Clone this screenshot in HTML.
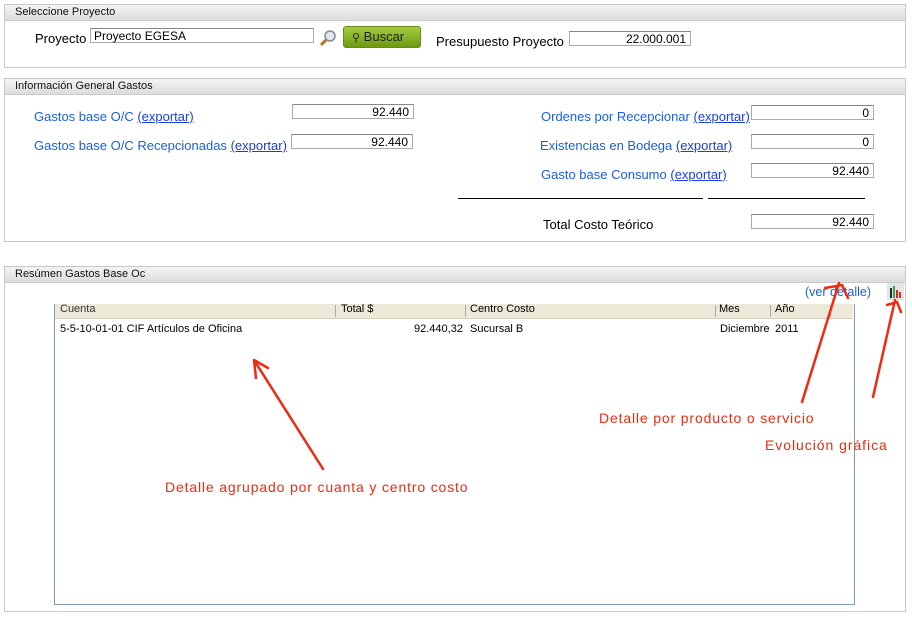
<!DOCTYPE html><html><head><style>
body{margin:0;width:912px;height:620px;background:#fff;font-family:"Liberation Sans",sans-serif;position:relative;overflow:hidden}
.p{position:absolute;left:4px;width:900px;border:1px solid #c8c8c8;background:#fff}
.h{height:15px;background:linear-gradient(#f4f4f4,#dcdcdc);border-bottom:1px solid #ccc;font-size:11px;line-height:15px;padding-left:10px;color:#111}
.a{position:absolute;font-size:13px;white-space:nowrap}
.b{color:#1a5fe0}.u{text-decoration:underline;color:#1a3fe0}
.i{position:absolute;height:15px;border:1px solid #aaa;border-top-color:#888;background:#fff;font-size:12px;line-height:15px;text-align:right;padding-right:4px;box-sizing:border-box}
.t{position:absolute;font-size:11px;white-space:nowrap}
.r{position:absolute;color:#f02a10;font-size:14px;letter-spacing:0.85px;white-space:nowrap}
</style></head><body>
<div class="p" style="top:4px;height:62px"><div class="h">Seleccione Proyecto</div></div>
<div class="a" style="left:35px;top:31px">Proyecto</div>
<div class="i" style="left:90px;top:28px;width:224px;text-align:left;padding-left:3px;font-size:12px">Proyecto EGESA</div>
<svg style="position:absolute;left:319px;top:29px" width="18" height="18"><circle cx="11" cy="7" r="5" fill="#dfe8f0" stroke="#889" stroke-width="1.5"/><line x1="7" y1="11" x2="2" y2="16" stroke="#c07020" stroke-width="3"/></svg>
<div style="position:absolute;left:343px;top:26px;width:76px;height:20px;border-radius:3px;background:linear-gradient(#a4cc40,#6e9a10);border:1px solid #6a8a20;font-size:13px;line-height:20px;color:#222"><span style="margin-left:8px;font-size:11px">⚲</span> Buscar</div>
<div class="a" style="left:436px;top:34px">Presupuesto Proyecto</div>
<div class="i" style="left:569px;top:31px;width:122px">22.000.001</div>

<div class="p" style="top:78px;height:162px"><div class="h">Información General Gastos</div></div>
<div class="a b" style="left:34px;top:109px">Gastos base O/C <span class="u">(exportar)</span></div>
<div class="a b" style="left:34px;top:138px">Gastos base O/C Recepcionadas <span class="u">(exportar)</span></div>
<div class="i" style="left:292px;top:104px;width:122px">92.440</div>
<div class="i" style="left:291px;top:134px;width:122px">92.440</div>
<div class="a b" style="left:541px;top:109px">Ordenes por Recepcionar <span class="u">(exportar)</span></div>
<div class="a b" style="left:540px;top:138px">Existencias en Bodega <span class="u">(exportar)</span></div>
<div class="a b" style="left:541px;top:167px">Gasto base Consumo <span class="u">(exportar)</span></div>
<div class="i" style="left:751px;top:105px;width:123px">0</div>
<div class="i" style="left:751px;top:134px;width:123px">0</div>
<div class="i" style="left:751px;top:163px;width:123px">92.440</div>
<div style="position:absolute;left:458px;top:198px;width:245px;height:1px;background:#000"></div>
<div style="position:absolute;left:708px;top:198px;width:157px;height:1px;background:#000"></div>
<div class="a" style="left:543px;top:217px">Total Costo Teórico</div>
<div class="i" style="left:751px;top:214px;width:123px">92.440</div>

<div class="p" style="top:266px;height:344px"><div class="h">Resúmen Gastos Base Oc</div></div>
<div class="a b" style="left:805px;top:285px;font-size:12.5px">(ver detalle)</div>
<svg style="position:absolute;left:887px;top:283px" width="17" height="17"><rect x="0" y="0" width="17" height="17" fill="#e4e4e4"/><rect x="3" y="5" width="2" height="10" fill="#224"/><rect x="6" y="3" width="2" height="12" fill="#3a3"/><rect x="9" y="7" width="2" height="8" fill="#d22"/><rect x="12" y="9" width="2" height="6" fill="#c33"/></svg>
<div style="position:absolute;left:54px;top:304px;width:799px;height:300px;border:1px solid #7f9db9;border-top:none;background:#fff"></div>
<div style="position:absolute;left:55px;top:304px;width:798px;height:14px;background:#ece9d8;border-bottom:1px solid #d6d2c2"></div>
<div class="t" style="left:60px;top:303px;color:#333">Cuenta</div>
<div class="t" style="left:341px;top:303px">Total $</div>
<div class="t" style="left:470px;top:303px">Centro Costo</div>
<div class="t" style="left:719px;top:303px">Mes</div>
<div class="t" style="left:775px;top:303px">Año</div>
<div style="position:absolute;left:335px;top:305px;width:1px;height:12px;background:#aaa"></div>
<div style="position:absolute;left:465px;top:305px;width:1px;height:12px;background:#aaa"></div>
<div style="position:absolute;left:715px;top:305px;width:1px;height:12px;background:#aaa"></div>
<div style="position:absolute;left:770px;top:305px;width:1px;height:12px;background:#aaa"></div>
<div style="position:absolute;left:830px;top:305px;width:1px;height:12px;background:#aaa"></div>
<div class="t" style="left:60px;top:323px">5-5-10-01-01 CIF Artículos de Oficina</div>
<div class="t" style="left:414px;top:323px">92.440,32</div>
<div class="t" style="left:470px;top:323px">Sucursal B</div>
<div class="t" style="left:720px;top:323px">Diciembre</div>
<div class="t" style="left:775px;top:323px">2011</div>
<svg style="position:absolute;left:0;top:0" width="912" height="620"><g stroke="#f02a10" stroke-width="2.5" fill="none" stroke-linecap="round">
<path d="M323 469L254 360M254 360L256 378M254 360L268 368"/>
<path d="M802 402L839 283M825 288L842 285L848 298"/>
<path d="M873 397L895 300M887 305L897 302L901 312"/></g></svg>
<div class="r" style="left:599px;top:410px">Detalle por producto o servicio</div>
<div class="r" style="left:765px;top:437px;letter-spacing:0.95px">Evolución gráfica</div>
<div class="r" style="left:165px;top:479px">Detalle agrupado por cuanta y centro costo</div>
</body></html>
